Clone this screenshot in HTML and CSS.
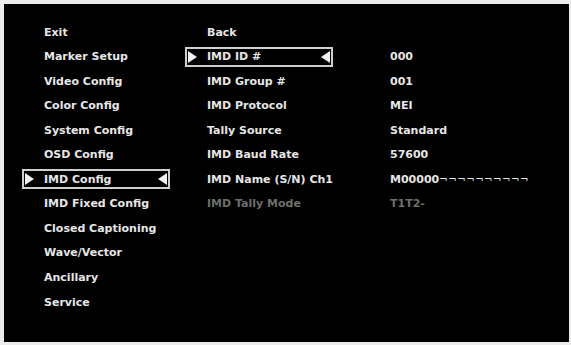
FILE: index.html
```html
<!DOCTYPE html>
<html>
<head>
<meta charset="utf-8">
<link rel="stylesheet" href="styles.css">
</head>
<body>
<div class="screen">
  <div class="menu">
    <div class="item">Exit</div>
    <div class="item">Marker Setup</div>
    <div class="item">Video Config</div>
    <div class="item">Color Config</div>
    <div class="item">System Config</div>
    <div class="item">OSD Config</div>
    <div class="item sel">IMD Config</div>
    <div class="item">IMD Fixed Config</div>
    <div class="item">Closed Captioning</div>
    <div class="item">Wave/Vector</div>
    <div class="item">Ancillary</div>
    <div class="item">Service</div>
  </div>
  <div class="settings">
    <div class="row"><div class="item">Back</div><div class="value"></div></div>
    <div class="row"><div class="item sel">IMD ID #</div><div class="value">000</div></div>
    <div class="row"><div class="item">IMD Group #</div><div class="value">001</div></div>
    <div class="row"><div class="item">IMD Protocol</div><div class="value">MEI</div></div>
    <div class="row"><div class="item">Tally Source</div><div class="value">Standard</div></div>
    <div class="row"><div class="item">IMD Baud Rate</div><div class="value">57600</div></div>
    <div class="row"><div class="item">IMD Name (S/N) Ch1</div><div class="value">M00000<span class="fill">¬¬¬¬¬¬¬¬¬¬</span></div></div>
    <div class="row dim"><div class="item">IMD Tally Mode</div><div class="value">T1T2-</div></div>
  </div>
</div>
</body>
</html>
```

FILE: styles.css
```css
html, body {
  margin: 0;
  padding: 0;
}
body {
  background: #ececec;
  width: 571px;
  height: 345px;
  overflow: hidden;
  font-family: "DejaVu Sans", Verdana, sans-serif;
  font-weight: bold;
  font-size: 11px;
  color: #e6e6e6;
}
.screen {
  margin: 4px 0 0 4px;
  width: 565px;
  height: 338px;
  background: #000;
  box-sizing: border-box;
  padding: 18px 0 0 18px;
  display: flex;
  gap: 15px;
}
.menu, .settings {
  display: flex;
  flex-direction: column;
  gap: 4.55px;
}
.menu {
  width: 148px;
}
.item {
  position: relative;
  box-sizing: border-box;
  height: 20px;
  width: 148px;
  border: 2px solid transparent;
  padding-left: 20px;
  display: flex;
  align-items: center;
  white-space: nowrap;
}
.item.sel {
  border-color: #cfcfcf;
}
.item.sel::before,
.item.sel::after {
  content: "";
  position: absolute;
  top: 2px;
  width: 0;
  height: 0;
  border-top: 6px solid transparent;
  border-bottom: 6px solid transparent;
}
.item.sel::before {
  left: 1px;
  border-left: 9px solid #f2f2f2;
}
.item.sel::after {
  right: 1px;
  border-right: 9px solid #f2f2f2;
}
.row {
  display: flex;
  align-items: center;
  gap: 57px;
  height: 20px;
}
.value {
  white-space: nowrap;
}
.fill {
  font-weight: normal;
  font-size: 10px;
  letter-spacing: 0.6px;
}
.row.dim {
  color: #6e6e6e;
}
```
